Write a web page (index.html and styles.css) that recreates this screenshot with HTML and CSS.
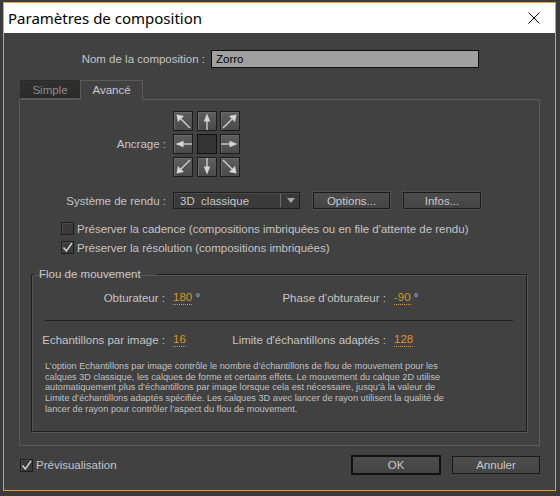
FILE: index.html
```html
<!DOCTYPE html>
<html lang="fr">
<head>
<meta charset="utf-8">
<title>Paramètres de composition</title>
<link rel="stylesheet" href="styles.css">
</head>
<body>
<div class="page">
  <div class="dialog">
    <div class="titlebar">
      <span class="title">Paramètres de composition</span>
      <svg class="close" width="12" height="12" viewBox="0 0 12 12"><path d="M0.5 0.5L11.5 11.5M11.5 0.5L0.5 11.5" stroke="#000" stroke-width="1" fill="none"/></svg>
    </div>
    <div class="content">
      <div class="name-row">
        <span class="name-label">Nom de la composition :</span>
        <div class="name-input">Zorro</div>
      </div>
      <div class="tabs">
        <div class="tab tab-off">Simple</div>
        <div class="tab tab-on">Avancé</div>
      </div>
      <div class="panel">
        <div class="anchor-row">
          <span class="lbl">Ancrage :</span>
          <div class="anchor-grid">
            <div class="abtn"><svg viewBox="0 0 18 18"><path d="M2.5 2.5L4 10L10 4Z" class="ah"/><path d="M7 7L16 16" class="al"/></svg></div>
            <div class="abtn"><svg viewBox="0 0 18 18"><path d="M9 1.5L5.8 9.5L12.2 9.5Z" class="ah"/><path d="M9 9L9 18" class="al"/></svg></div>
            <div class="abtn"><svg viewBox="0 0 18 18"><path d="M15.5 2.5L8 4L14 10Z" class="ah"/><path d="M11 7L2 16" class="al"/></svg></div>
            <div class="abtn"><svg viewBox="0 0 18 18"><path d="M1.5 9L9.5 5.8L9.5 12.2Z" class="ah"/><path d="M9 9L18 9" class="al"/></svg></div>
            <div class="abtn center"></div>
            <div class="abtn"><svg viewBox="0 0 18 18"><path d="M16.5 9L8.5 5.8L8.5 12.2Z" class="ah"/><path d="M0 9L9 9" class="al"/></svg></div>
            <div class="abtn"><svg viewBox="0 0 18 18"><path d="M2.5 15.5L4 8L10 14Z" class="ah"/><path d="M7 11L16 2" class="al"/></svg></div>
            <div class="abtn"><svg viewBox="0 0 18 18"><path d="M9 16.5L5.8 8.5L12.2 8.5Z" class="ah"/><path d="M9 0L9 9" class="al"/></svg></div>
            <div class="abtn"><svg viewBox="0 0 18 18"><path d="M15.5 15.5L14 8L8 14Z" class="ah"/><path d="M11 11L2 2" class="al"/></svg></div>
          </div>
        </div>
        <div class="render-row">
          <span class="lbl">Système de rendu :</span>
          <div class="select">
            <span class="select-text">3D&nbsp; classique</span>
            <span class="select-div"></span>
            <svg class="select-arrow" width="8" height="5" viewBox="0 0 8 5"><path d="M0 0L8 0L4 5Z" fill="#a8a8a8"/></svg>
          </div>
          <div class="btn btn-options">Options...</div>
          <div class="btn btn-infos">Infos...</div>
        </div>
        <div class="check-row first">
          <span class="cbox"></span>
          <span class="ctext">Préserver la cadence (compositions imbriquées ou en file d'attente de rendu)</span>
        </div>
        <div class="check-row">
          <span class="cbox"><svg viewBox="0 0 11 11"><path d="M1.5 5.5L4.3 9L10 1" class="ck"/></svg></span>
          <span class="ctext">Préserver la résolution (compositions imbriquées)</span>
        </div>
        <fieldset class="group">
          <legend class="legend">Flou de mouvement</legend>
          <div class="grow first">
            <span class="glbl">Obturateur :</span>
            <span class="gval"><span class="num">180</span> °</span>
            <span class="glbl2">Phase d’obturateur :</span>
            <span class="gval"><span class="num">-90</span> °</span>
          </div>
          <div class="sep"></div>
          <div class="grow second">
            <span class="glbl">Echantillons par image :</span>
            <span class="gval"><span class="num">16</span></span>
            <span class="glbl2">Limite d'échantillons adaptés :</span>
            <span class="gval"><span class="num">128</span></span>
          </div>
          <p class="desc">L’option Echantillons par image contrôle le nombre d’échantillons de flou de mouvement pour les<br>calques 3D classique, les calques de forme et certains effets. Le mouvement du calque 2D utilise<br>automatiquement plus d’échantillons par image lorsque cela est nécessaire, jusqu’à la valeur de<br>Limite d’échantillons adaptés spécifiée. Les calques 3D avec lancer de rayon utilisent la qualité de<br>lancer de rayon pour contrôler l’aspect du flou de mouvement.</p>
        </fieldset>
      </div>
      <div class="footer">
        <span class="cbox"><svg viewBox="0 0 11 11"><path d="M1.5 5.5L4.3 9L10 1" class="ck"/></svg></span>
        <span class="ctext">Prévisualisation</span>
        <div class="btn btn-ok">OK</div>
        <div class="btn btn-cancel">Annuler</div>
      </div>
    </div>
  </div>
</div>
</body>
</html>
```

FILE: styles.css
```css
* { box-sizing: border-box; }
html, body { margin: 0; padding: 0; }
body {
  width: 560px;
  height: 496px;
  overflow: hidden;
  background: #3b3b3b;
  font-family: "Liberation Sans", Arial, sans-serif;
  font-size: 11.5px;
  color: #c4c4c4;
}
.page { padding: 2px 0 0 3px; }
.dialog {
  width: 553px;
  height: 489px;
  border: 1px solid #f29d2a;
  background: #414141;
  display: flex;
  flex-direction: column;
}
.titlebar {
  height: 30px;
  flex: none;
  background: #ffffff;
  display: flex;
  align-items: center;
  justify-content: space-between;
  padding: 0 15px 0 4px;
}
.title {
  font-family: "Noto Sans", "Open Sans", sans-serif;
  font-size: 15px;
  color: #000;
}
.close { display: block; }
.content { padding-top: 17px; }

.name-row { display: flex; align-items: center; height: 18px; }
.name-label { width: 201px; text-align: right; }
.name-input {
  margin-left: 6px;
  width: 268px;
  height: 18px;
  background: #a0a0a0;
  border: 1px solid #0e0e0e;
  color: #000;
  padding-left: 4px;
  line-height: 16px;
}

.tabs { display: flex; align-items: flex-end; height: 19px; margin: 12px 0 0 16px; }
.tab { text-align: center; line-height: 18px; }
.tab-off {
  width: 60px;
  height: 19px;
  background: linear-gradient(#303030, #2a2a2a);
  border: 1px solid #2a2a2a;
  border-bottom-color: #5a5a5a;
  color: #8c8c8c;
}
.tab-on {
  position: relative;
  z-index: 1;
  width: 63px;
  height: 20px;
  margin-bottom: -1px;
  background: #414141;
  border: 1px solid #5a5a5a;
  border-bottom: none;
  color: #c8c8c8;
}

.panel {
  margin-left: 15px;
  width: 521px;
  height: 347px;
  border: 1px solid #5a5a5a;
  padding-top: 11px;
}
.lbl { width: 146px; text-align: right; flex: none; }

.anchor-row { display: flex; align-items: center; }
.anchor-grid {
  margin-left: 7px;
  display: grid;
  grid-template-columns: repeat(3, 20px);
  grid-auto-rows: 20px;
  gap: 3px 3.5px;
}
.abtn {
  border: 1px solid #1c1c1c;
  background: linear-gradient(#5e5e5e, #4b4b4b);
  box-shadow: inset 1px 1px 0 #6a6a6a;
}
.abtn svg { display: block; width: 18px; height: 18px; }
.abtn.center { background: #333333; border-color: #111; box-shadow: none; }
.ah { fill: #d6d6d6; }
.al { stroke: #d6d6d6; stroke-width: 1.3; fill: none; }

.render-row { display: flex; align-items: center; height: 17px; margin-top: 15px; }
.select {
  margin-left: 7px;
  width: 127px;
  height: 17px;
  display: flex;
  align-items: center;
  background: #3a3a3a;
  border: 1px solid #1e1e1e;
  box-shadow: inset 1px 1px 0 #4a4a4a;
}
.select-text { flex: 1; padding-left: 6px; color: #c8c8c8; }
.select-div { width: 1px; height: 13px; background: #6c6c6c; }
.select-arrow { margin: 0 4px 0 6px; display: block; }
.btn {
  height: 17px;
  display: flex;
  align-items: center;
  justify-content: center;
  background: linear-gradient(#4d4d4d, #444444);
  border: 1px solid #1a1a1a;
  box-shadow: 0 0 0 1px #4e4e4e;
  color: #c8c8c8;
}
.btn-options { margin-left: 13px; width: 77px; }
.btn-infos { margin-left: 13px; width: 78px; }

.check-row { display: flex; align-items: center; height: 19px; margin-left: 41px; }
.check-row.first { margin-top: 10px; }
.cbox {
  width: 13px;
  height: 13px;
  flex: none;
  border: 1px solid #1e1e1e;
  background: #3a3a3a;
  box-shadow: inset 1px 1px 0 #4c4c4c;
}
.cbox svg { display: block; width: 11px; height: 11px; }
.ck { stroke: #d0d0d0; stroke-width: 1.5; fill: none; }
.ctext { margin-left: 3px; white-space: nowrap; }

.group {
  margin: 10px 0 0 11px;
  padding: 0;
  width: 496px;
  height: 165px;
  border: 1px solid #1e1e1e;
  box-shadow: 1px 1px 0 #555, inset 1px 1px 0 #555;
  min-width: 0;
}
.legend {
  margin-left: 2px;
  padding: 0 16px 0 5px;
  line-height: 14px;
  color: #c8c8c8;
}
.grow { display: flex; align-items: center; height: 16px; white-space: nowrap; }
.grow.first { margin-top: 9px; }
.grow.second { margin-top: 11px; }
.glbl { width: 133px; text-align: right; flex: none; }
.gval { width: 46px; flex: none; margin-left: 8px; }
.glbl2 { width: 167px; text-align: right; flex: none; }
.grow .gval:last-child { width: auto; }
.num {
  display: inline-block;
  color: #d9962a;
  line-height: 13px;
  border-bottom: 1px dotted #d9962a;
}
.sep {
  margin: 14px 0 0 13px;
  width: 468px;
  height: 1px;
  background: #1e1e1e;
}
.desc {
  margin: 13px 0 0 13px;
  font-size: 9.2px;
  line-height: 10.7px;
  white-space: nowrap;
  color: #c0c0c0;
}

.footer {
  display: flex;
  align-items: center;
  height: 20px;
  margin-top: 9px;
  padding: 0 15px 0 16px;
}
.btn-ok {
  margin-left: auto;
  width: 90px;
  height: 20px;
  border: 2px solid #111;
  box-shadow: none;
}
.btn-cancel {
  margin-left: 11px;
  width: 88px;
  height: 18px;
  box-shadow: none;
}
```
